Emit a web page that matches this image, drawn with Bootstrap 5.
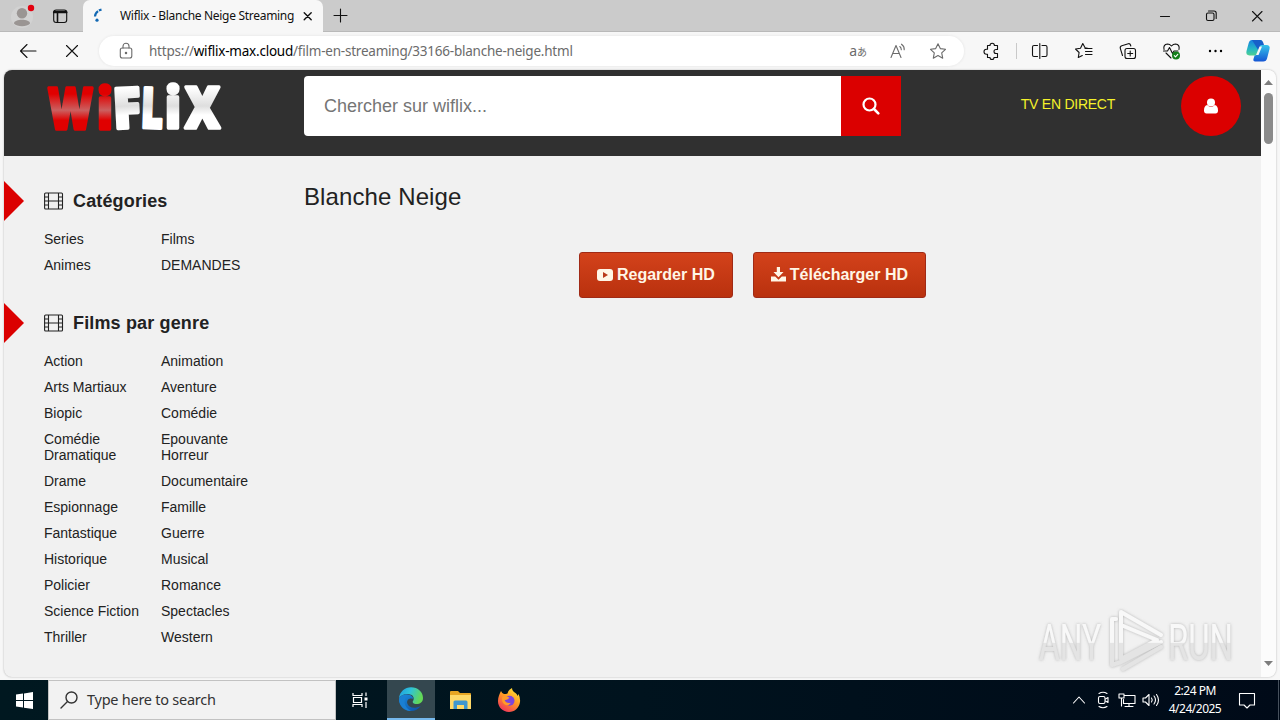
<!DOCTYPE html>
<html lang="fr">
  <head>
    <meta charset="UTF-8" />
    <meta name="viewport" content="width=device-width, initial-scale=1.0" />
    <title>Wiflix - Blanche Neige Streaming</title>
    <link
      href="https://cdn.jsdelivr.net/npm/bootstrap@5.3.0/dist/css/bootstrap.min.css"
      rel="stylesheet"
    />
    <style>
      body {
        height: 720px;
        background: #f7f7f7;
        font-family: "Noto Sans", "Open Sans", sans-serif;
        color: #111;
      }

      svg {
        display: block;
        flex-shrink: 0;
      }

      .ln {
        fill: none;
        stroke: currentColor;
        stroke-width: 1.1;
        stroke-linecap: round;
        stroke-linejoin: round;
      }

      /* tab strip */
      .tab-strip {
        height: 32px;
        background: #cbcbcb;
        border-bottom: 1px solid #b9b9b9;
      }

      .tab-tools {
        width: 83px;
      }

      .tab-active {
        width: 240px;
        height: 32px;
        background: #f7f7f7;
        border-radius: 7px 7px 0 0;
        font-size: 12px;
      }

      .tab-title {
        width: 176px;
        margin-left: 12px;
        letter-spacing: -0.3px;
      }

      .win-btn {
        width: 46px;
      }

      /* address bar */
      .tool-row {
        height: 38px;
      }

      .tool-btn {
        width: 44px;
      }

      .nav-tools {
        width: 99px;
        padding-left: 6px;
      }

      .omnibox {
        width: 865px;
        height: 30px;
        background: #fff;
        border-radius: 15px;
        box-shadow: 0 0 2px 1px #ededed;
        color: #6b6b6b;
        padding-left: 18px;
      }

      .url-text {
        font-size: 13.5px;
        margin-left: 14px;
        letter-spacing: -0.225px;
      }

      .omni-tools {
        margin-right: 9px;
      }

      .tool-sep {
        width: 1px;
        height: 16px;
        background: #c9c9c9;
      }

      .trans-icon {
        font: 14px/1 "Noto Sans", "Noto Sans CJK JP", sans-serif;
      }

      .trans-icon small {
        font-size: 10px;
      }

      .copilot {
        margin-left: 3px;
      }

      /* web page */
      .page-frame {
        margin: 0 4px 3px;
        height: 607px;
        background: #f1f1f1;
        border-radius: 8px;
        box-shadow: 0 0 2px #aaa;
        font-family: "Liberation Sans", Arial, sans-serif;
        color: #222;
      }

      .site {
        width: 1257px;
      }

      .site-head {
        height: 86px;
        background: #303030;
        padding: 6px 20px 0 40px;
      }

      .site-logo {
        width: 260px;
      }

      .site-logo svg {
        overflow: visible;
      }

      .search-input {
        width: 537px;
        height: 60px;
        background: #fff;
        border-radius: 4px 0 0 4px;
        padding-left: 20px;
        font-size: 18px;
        color: #757575;
      }

      .red-box {
        width: 60px;
        height: 60px;
        background: #db0000;
        color: #fff;
      }

      .tv-link {
        color: #f4f12a;
        font-size: 14px;
        line-height: 56px;
        margin-right: 66px;
        letter-spacing: -0.25px;
      }

      .side-menu {
        width: 300px;
        padding-top: 25px;
      }

      .side-title {
        height: 40px;
        font-size: 18px;
        font-weight: 700;
        letter-spacing: 0.15px;
        margin-bottom: 10px;
      }

      .side-title::before {
        content: "";
        width: 20px;
        height: 40px;
        background: #db0000;
        clip-path: polygon(0 0, 100% 50%, 0 100%);
        margin-right: 20px;
      }

      .side-links {
        display: grid;
        grid-template-columns: 117px 110px;
        row-gap: 10px;
        padding-left: 40px;
        margin-bottom: 30px;
        font-size: 14px;
        line-height: 16px;
      }

      .film-title {
        font-size: 24px;
        line-height: 30px;
        margin: 26px 0 40px;
        letter-spacing: 0.1px;
        font-weight: 400;
      }

      .film-main {
        width: 897px;
      }

      .film-actions {
        gap: 20px;
      }

      .btn-film {
        height: 46px;
        padding: 0 17px;
        border: 1px solid #a02a16;
        border-radius: 3px;
        background: linear-gradient(#d3421b, #b9310e);
        color: #fff6e6;
        font-size: 16px;
        font-weight: 700;
        line-height: 44px;
        gap: 4px;
      }

      /* scrollbar */
      .scroll-track {
        width: 15px;
        background: #fcfcfc;
        padding: 10px 0;
      }

      .scroll-thumb {
        width: 9px;
        height: 51px;
        border-radius: 5px;
        background: #8b8b8b;
        margin-top: 3px;
      }

      .watermark {
        position: absolute;
        left: 1034px;
        top: 606px;
      }

      /* taskbar */
      .task-bar {
        height: 40px;
        background: linear-gradient(to right, #001820, #00131e 50%, #000a18);
        color: #fff;
      }

      .task-btn {
        width: 48px;
        height: 40px;
      }

      .task-btn.on {
        background: #34474f;
        border-bottom: 2px solid #76b9ed;
        margin-left: 3px;
      }

      .task-search {
        width: 288px;
        height: 40px;
        background: #f2f2f2;
        border: 1px solid #c2c2c2;
        color: #333;
        font-size: 14.5px;
        padding-left: 11px;
        letter-spacing: -0.25px;
      }

      .task-clock {
        width: 64px;
        font-size: 12px;
        line-height: 18px;
        letter-spacing: -0.5px;
      }
    </style>
  </head>
  <body class="overflow-hidden">
    <div class="tab-strip d-flex">
      <div class="tab-tools d-flex align-items-center">
        <svg class="ms-2" width="28" height="32" viewBox="0 0 28 32">
          <circle cx="14" cy="17" r="11" fill="#d2d2d2" />
          <circle cx="14" cy="13.3" r="5.2" fill="#9a9593" />
          <path d="M6 23.5c0-5 16-5 16 0-3 3.5-13 3.500-16 0z" fill="#9a9593" />
          <circle cx="23" cy="8" r="3.200" fill="#e3000f" />
        </svg>
        <svg class="ln" width="48" height="32" viewBox="0 0 48 32">
          <rect x="17.700" y="10" width="13" height="12.500" rx="2.500" />
          <path d="M17.700 12.500h13M18 11.500h12.500M21.500 13v9" stroke-width="1.600" />
        </svg>
      </div>
      <div class="tab-active d-flex align-items-center">
        <svg width="25" height="32" viewBox="0 0 25 32" fill="none">
          <path d="M12 16.500c.2-3.600 2.700-6 6.500-6.800" stroke="#1268b3" stroke-width="2.200" stroke-dasharray="6.500 1" />
          <circle cx="14" cy="20.200" r="1.600" fill="#1268b3" />
        </svg>
        <span class="tab-title text-nowrap">Wiflix - Blanche Neige Streaming</span>
        <svg class="ln ms-1" width="16" height="16" viewBox="0 0 16 16">
          <path d="M4.200 4.700l7 7m0-7l-7 7" stroke-width="1.400" />
        </svg>
      </div>
      <svg class="ln" width="34" height="32" viewBox="0 0 34 32">
        <path d="M11 15.500h13M17.500 9v13" />
      </svg>
      <div class="d-flex ms-auto">
        <svg class="ln win-btn" height="32" viewBox="0 0 46 32"><path d="M18.500 16.500h9" /></svg>
        <svg class="ln win-btn" height="32" viewBox="0 0 46 32">
          <rect x="18.500" y="13" width="7.500" height="7.500" rx="1.500" />
          <path d="M20.500 11h5.500q2.200 0 2.200 2.200v5.300" />
        </svg>
        <svg class="ln win-btn" height="32" viewBox="0 0 46 32"><path d="M18.500 11.500l9.500 9.500m0-9.500l-9.500 9.500" /></svg>
      </div>
    </div>

    <div class="tool-row d-flex align-items-center">
      <div class="nav-tools d-flex">
        <svg class="ln tool-btn" height="24" viewBox="0 0 44 24"><path d="M30 12H14.500m6.500-6.500L14.500 12l6.500 6.500" /></svg>
        <svg class="ln tool-btn" height="24" viewBox="0 0 44 24"><path d="M16.500 6.500l11 11m0-11l-11 11" /></svg>
      </div>
      <div class="omnibox d-flex align-items-center">
        <svg class="ln" width="18" height="18" viewBox="0 0 18 18">
          <rect x="3.300" y="6" width="11.500" height="10" rx="2" />
          <path d="M6 6V4.300a3 3 0 0 1 6 0V6" />
          <circle cx="9" cy="11" r=".7" fill="currentColor" />
        </svg>
        <span class="url-text text-nowrap">https://<span class="text-black">wiflix-max.cloud</span>/film-en-streaming/33166-blanche-neige.html</span>
        <div class="omni-tools d-flex align-items-center ms-auto">
          <span class="trans-icon text-center">a<small>あ</small></span>
          <svg class="ln ms-3" width="30" height="20" viewBox="0 0 30 20">
            <path d="M8 16.500L13 4.500l5 12M9.800 12.500h6.500M16.800 5.500q1.500 1 1.500 3.300M18.500 3.200q3 2 2.700 5.600" />
          </svg>
          <svg class="ln ms-2" width="34" height="20" viewBox="0 0 34 20">
            <path d="M17 2.800l2.300 4.800 5.200.7-3.800 3.600 1 5.300-4.700-2.600-4.700 2.600 1-5.300-3.800-3.600 5.200-.7z" />
          </svg>
        </div>
      </div>
      <svg class="ln ms-2" width="40" height="24" viewBox="0 0 40 24">
        <path d="M15.500 6.500H18a2.200 2.200 0 1 1 4.400 0h3.100v4H24a2 2 0 0 0 0 4h1.500v4H22a2 2 0 0 1-4 0h-2.500v-3.300h-1a2.500 2.500 0 0 1 0-5h1z" />
      </svg>
      <div class="tool-sep ms-1"></div>
      <svg class="ln tool-btn" height="24" viewBox="0 0 44 24">
        <path d="M20.500 6.500H17A1.500 1.500 0 0 0 15.500 8v8a1.500 1.500 0 0 0 1.500 1.500h3.500M25 6.500h3.500A1.500 1.500 0 0 1 30 8v8a1.500 1.500 0 0 1-1.500 1.500H25M22.800 4.500v15" />
      </svg>
      <svg class="ln tool-btn" height="24" viewBox="0 0 44 24">
        <path d="M27.500 9.500l-3.300-.6L21.800 4.500l-2.300 4.700-5 .8 3.600 3.500-.8 5 4-2M24.500 12.500H31M24 9.500h7M24.500 15.500H31" />
      </svg>
      <svg class="ln tool-btn" height="24" viewBox="0 0 44 24">
        <rect x="20" y="9.500" width="10.500" height="10" rx="2" />
        <path d="M25.200 12v5m-2.500-2.500h5M17.500 16.500l-2.200-7.200q-.5-2 1.500-2.600l6.500-2q1.700-.4 2.200 1.300l.3 1" />
      </svg>
      <svg class="ln tool-btn" height="24" viewBox="0 0 44 24">
        <path d="M15 10.500q-1-5 3.500-5.500 2.300 0 4 2 1.700-2 4-2 4.500.5 3.500 5.500M17 14l5 5M14.500 12h4l2-3.500 3 6 1.500-2.500h4" />
        <circle cx="27" cy="16.500" r="4" fill="#14801b" stroke="none" />
        <path d="M25.300 16.600l1.200 1.200 2.300-2.400" stroke="#fff" />
      </svg>
      <svg class="tool-btn" height="24" viewBox="0 0 44 24">
        <circle cx="17" cy="12" r="1.200" /><circle cx="22.500" cy="12" r="1.200" /><circle cx="28" cy="12" r="1.200" />
      </svg>
      <svg class="copilot" width="36" height="26" viewBox="0 0 36 26">
        <defs>
          <linearGradient id="cpA" x1="0" y1="0" x2="0" y2="1">
            <stop offset="0" stop-color="#1680e0" /><stop offset=".6" stop-color="#27b8c3" /><stop offset="1" stop-color="#4fd08f" />
          </linearGradient>
          <linearGradient id="cpB" x1="0" y1="0" x2="0" y2="1">
            <stop offset="0" stop-color="#35c4ea" /><stop offset="1" stop-color="#1556d4" />
          </linearGradient>
        </defs>
        <path d="M12 2h8q3 0 2.200 3l-3 9q-1 3.500-4 3.500H9.500Q5.500 17 6.500 13l2.200-8q.8-3 3.300-3z" fill="url(#cpA)" />
        <path d="M20.500 7h6q4 .3 3 4l-2.300 9q-.8 3.500-4 3.500h-8q-2.500 0-1.600-3l1-3q3 0 4-4z" fill="url(#cpB)" />
        <path d="M12 2h8q2.500 0 3.200 2.500l.8 2.500h-3.500l-2 5.500z" fill="#1760c9" />
        <path d="M19.500 8.500h2.500l-3.500 8.500H16z" fill="#f7f7f7" />
      </svg>
    </div>

    <div class="page-frame d-flex overflow-hidden">
      <div class="site">
        <header class="site-head d-flex">
          <div class="site-logo">
            <svg width="180" height="76" viewBox="0 0 180 76">
              <defs>
                <linearGradient id="red" x1="0" y1="0" x2="0" y2="60" gradientUnits="userSpaceOnUse">
                  <stop offset=".3" stop-color="#e00000" /><stop offset=".57" stop-color="#cb6060" /><stop offset=".74" stop-color="#e00000" />
                </linearGradient>
                <linearGradient id="grey" x1="0" y1="0" x2="0" y2="60" gradientUnits="userSpaceOnUse">
                  <stop offset=".2" stop-color="#fff" /><stop offset=".5" stop-color="#dedede" /><stop offset=".65" stop-color="#fff" />
                </linearGradient>
              </defs>
              <g font-family="Open Sans, Noto Sans, sans-serif" font-weight="800" font-size="56" stroke-width="3.500" stroke-linejoin="round">
                <g fill="url(#red)" stroke="url(#red)">
                  <text x="4" y="53" textLength="45" lengthAdjust="spacingAndGlyphs">W</text>
                  <text x="53" y="53" textLength="16" lengthAdjust="spacingAndGlyphs">i</text>
                </g>
                <g fill="url(#grey)" stroke="url(#grey)">
                  <text x="69" y="52" textLength="28" lengthAdjust="spacingAndGlyphs" transform="rotate(-3 83 35)">F</text>
                  <text x="97" y="52" textLength="22" lengthAdjust="spacingAndGlyphs" transform="rotate(2 108 35)">L</text>
                  <text x="121" y="52" textLength="16" lengthAdjust="spacingAndGlyphs">i</text>
                  <text x="141" y="52" textLength="35" lengthAdjust="spacingAndGlyphs">X</text>
                </g>
              </g>
            </svg>
          </div>
          <div class="search-input d-flex align-items-center">Chercher sur wiflix...</div>
          <div class="red-box d-flex align-items-center justify-content-center">
            <svg width="18" height="18" viewBox="0 0 18 18" fill="none" stroke="#fff" stroke-linecap="round">
              <circle cx="7.500" cy="7.500" r="6" stroke-width="2.200" />
              <path d="M12 12l4.300 4.300" stroke-width="2.600" />
            </svg>
          </div>
          <span class="tv-link ms-auto">TV EN DIRECT</span>
          <div class="red-box rounded-circle d-flex align-items-center justify-content-center">
            <svg width="16" height="18" viewBox="0 0 16 18" fill="#fff">
              <circle cx="8" cy="5.500" r="4" />
              <path d="M4.300 8q1.700 2 3.700 2t3.700-2Q15 8.500 15 13.500 15 16.500 12.500 16.500h-9Q1 16.500 1 13.500 1 8.500 4.300 8z" />
            </svg>
          </div>
        </header>

        <div class="d-flex">
          <aside class="side-menu">
            <div class="side-title d-flex align-items-center">
              <svg class="me-2" width="21" height="18" viewBox="0 0 21 18"><use href="#film" /></svg>Catégories
            </div>
            <div class="side-links">
              <span>Series</span><span>Films</span>
              <span>Animes</span><span>DEMANDES</span>
            </div>
            <div class="side-title d-flex align-items-center">
              <svg class="me-2" width="21" height="18" viewBox="0 0 21 18">
                <g id="film" fill="none" stroke="#222" stroke-width="1.100">
                  <rect x=".6" y="1" width="17.900" height="16" rx="1" />
                  <path d="M4.500 1v16M14.500 1v16M4.500 9h10M.5 5h4M.5 9h4M.5 13h4M14.500 5h4M14.500 9h4M14.500 13h4" />
                </g>
              </svg>Films par genre
            </div>
            <div class="side-links">
              <span>Action</span><span>Animation</span>
              <span>Arts Martiaux</span><span>Aventure</span>
              <span>Biopic</span><span>Comédie</span>
              <span>Comédie<br />Dramatique</span><span>Epouvante<br />Horreur</span>
              <span>Drame</span><span>Documentaire</span>
              <span>Espionnage</span><span>Famille</span>
              <span>Fantastique</span><span>Guerre</span>
              <span>Historique</span><span>Musical</span>
              <span>Policier</span><span>Romance</span>
              <span>Science Fiction</span><span>Spectacles</span>
              <span>Thriller</span><span>Western</span>
            </div>
          </aside>
          <main class="film-main">
            <h1 class="film-title">Blanche Neige</h1>
            <div class="film-actions d-flex justify-content-center">
              <div class="btn-film d-flex align-items-center">
                <svg width="16" height="14" viewBox="0 0 16 14">
                  <rect y="1" width="16" height="12" rx="3" fill="#fff6e6" />
                  <path d="M6 4l5 3-5 3z" fill="#b93a1a" />
                </svg>
                Regarder HD
              </div>
              <div class="btn-film d-flex align-items-center">
                <svg width="15" height="16" viewBox="0 0 15 16" fill="#fff6e6">
                  <path d="M5.800 0H9v5h3.500l-5 5.200-5-5.200h3.300z" />
                  <path d="M0 9.500h4.200l3.300 3.200 3.300-3.200H15v5H0z" />
                </svg>
                Télécharger HD
              </div>
            </div>
          </main>
        </div>
      </div>
      <div class="scroll-track d-flex flex-column align-items-center">
        <svg width="9" height="10" viewBox="0 0 9 10"><path d="M4.500 0L9 5H0z" fill="#7d7d7d" /></svg>
        <div class="scroll-thumb"></div>
        <svg class="mt-auto" width="9" height="8" viewBox="0 0 9 8"><path d="M0 2h9L4.500 7z" fill="#7d7d7d" /></svg>
      </div>
    </div>

    <svg class="watermark" width="206" height="70" viewBox="0 0 206 70">
      <defs>
        <filter id="halo" x="-10%" y="-10%" width="120%" height="120%">
          <feDropShadow dx="0" dy="0" stdDeviation="1.800" flood-color="#888" flood-opacity=".6" />
        </filter>
        <linearGradient id="wm" x1="0" y1="0" x2="0" y2="70" gradientUnits="userSpaceOnUse">
          <stop offset=".52" stop-color="#f8f8f8" /><stop offset=".53" stop-color="#e4e4e4" />
        </linearGradient>
      </defs>
      <g filter="url(#halo)">
        <g font-family="Roboto, sans-serif" font-size="50" fill="url(#wm)">
          <text x="5" y="54" textLength="62" lengthAdjust="spacingAndGlyphs">ANY</text>
          <text x="134" y="54" textLength="65" lengthAdjust="spacingAndGlyphs">RUN</text>
        </g>
        <g fill="none" stroke="url(#wm)" stroke-width="4" stroke-linejoin="round" stroke-linecap="round">
          <path d="M87 19V6l40 23M87 19v34l36-19-36-15M82 13h-4v46l9-3 40-20M89 63l38-22" />
        </g>
      </g>
    </svg>

    <footer class="task-bar d-flex align-items-center">
      <div class="task-btn d-flex align-items-center justify-content-center">
        <svg width="17" height="17" viewBox="0 0 17 17" fill="#fff">
          <path d="M0 2.500l7-1V8H0zM8 1.400L17 0v8H8zM0 9h7v6.600l-7-1zM8 9h9v8l-9-1.300z" />
        </svg>
      </div>
      <div class="task-search d-flex align-items-center">
        <svg class="ln" width="27" height="20" viewBox="0 0 27 20">
          <circle cx="11.500" cy="7.500" r="5.500" stroke-width="1.400" /><path d="M7.500 11.500L1 18" stroke-width="1.400" />
        </svg>
        Type here to search
      </div>
      <div class="task-btn d-flex align-items-center justify-content-center">
        <svg width="18" height="18" viewBox="0 0 18 18" fill="none" stroke="#fff" stroke-width="1.200">
          <path d="M2 2v2.500h9V2M2 16v-2.500h9V16M2.500 6.500h8v5h-8zM15 1.500V5M15 11v6" />
          <path d="M13.500 6.500h3v3h-3z" fill="#fff" stroke="none" />
        </svg>
      </div>
      <div class="task-btn on d-flex align-items-center justify-content-center">
        <svg width="26" height="26" viewBox="0 0 26 26">
          <defs>
            <linearGradient id="edgeTop" x1="0" y1="0" x2="1" y2=".3">
              <stop offset="0" stop-color="#1d9be0" /><stop offset=".5" stop-color="#2fc3d8" /><stop offset="1" stop-color="#63d857" />
            </linearGradient>
            <linearGradient id="edgeLow" x1="0" y1="0" x2="1" y2="1">
              <stop offset="0" stop-color="#1b8fe0" /><stop offset="1" stop-color="#0c4da5" />
            </linearGradient>
          </defs>
          <path d="M1 12.500C1.500 5.500 7 1.200 13 1.200 20 1.200 25 6 25 12c0 4-3 6-6.500 6-3 0-4.500-1.500-3.500-3 1.500-2 1-6-3.500-6.800C7 7.500 2.500 9 1 12.500z" fill="url(#edgeTop)" />
          <path d="M1 13C2 9.500 6 8 10 8.500c3.500.4 5.300 2.500 5.300 4.500-4-1.500-7 1-6 4.500 1 4 7 6 13.500 2.500C20.500 23 17 25 13 25 6 25 1 19.500 1 13z" fill="url(#edgeLow)" />
          <path d="M10 9c-5 3-5 12 3 16C7 25.500 1 20 1 13c1.500-3.500 5-5 9-4z" fill="#1a7fd2" />
        </svg>
      </div>
      <div class="task-btn d-flex align-items-center justify-content-center">
        <svg class="ms-1" width="22" height="20" viewBox="0 0 22 20">
          <path d="M0 2q0-1 1-1h7l2 2h10q1 0 1 1v15H0z" fill="#e8a623" />
          <path d="M0 5h21v14H0z" fill="#ffd968" />
          <path d="M3.500 19v-7q0-1.500 1.500-1.500h11q1.500 0 1.500 1.500v7h-3.500v-4h-7v4z" fill="#3f97cf" />
        </svg>
      </div>
      <div class="task-btn d-flex align-items-center justify-content-center">
        <svg class="ms-1" width="24" height="26" viewBox="0 0 24 26">
          <defs>
            <linearGradient id="fx" x1=".8" y1="0" x2=".2" y2="1">
              <stop offset="0" stop-color="#ffe536" /><stop offset=".45" stop-color="#ff9a24" /><stop offset="1" stop-color="#f02d5f" />
            </linearGradient>
          </defs>
          <path d="M4 4q1 2.500 3 3 2 0 3.500-.5Q11 3 15 1q0 3 3.500 5 1.500 1 2 3l1-2q2 4 1.500 8c-.8 6-5.500 10-11 10C5.500 25 .8 20 1 14c0-4 1.500-7 3-10z" fill="url(#fx)" />
          <circle cx="12.500" cy="13.800" r="5" fill="#7b45dc" />
          <path d="M5.500 9.500q4-1.200 7 1.300-2 2.700-5 2 1.500 4 6.500 3-3 4.200-7 1.200-3-2.800-1.500-7.500z" fill="#ff9b28" />
        </svg>
      </div>
      <div class="d-flex align-items-center ms-auto">
        <svg class="ln" width="24" height="20" viewBox="0 0 24 20"><path d="M6.500 13l5.500-6 5.500 6" /></svg>
        <svg class="ln" width="24" height="20" viewBox="0 0 24 20">
          <rect x="7.500" y="6.500" width="6.500" height="7" rx="1.500" /><path d="M14.500 9l2.500-1.500v5L14.500 11M8 3.500q4-2.500 8 0M8 16.500q4 2.500 8 0" />
        </svg>
        <svg class="ln" width="24" height="20" viewBox="0 0 24 20">
          <path d="M9.500 5.500H20v8H8.500V9.500M4 4h5v4H4zM6.500 8v8M14 13.500v3M10 16.500h8" />
        </svg>
        <svg class="ln" width="24" height="20" viewBox="0 0 24 20">
          <path d="M4 8h2.500L10 4.500v11L6.500 12H4zM12.500 8q1.500 2 0 4M15 6q3 4 0 8M17.500 4.500q4 5.500 0 11" />
        </svg>
        <div class="task-clock text-center text-nowrap"><div>2:24 PM</div><div>4/24/2025</div></div>
        <svg class="ln ms-1" width="32" height="20" viewBox="0 0 32 20">
          <path d="M8.500 3.500h15V15H19l-3 3-3-3H8.500z" />
        </svg>
        <svg width="17" height="40" viewBox="0 0 17 40"><path d="M15.500 0v40" stroke="#46505c" /></svg>
      </div>
    </footer>

    <script src="https://cdn.jsdelivr.net/npm/bootstrap@5.3.0/dist/js/bootstrap.bundle.min.js"></script>
  </body>
</html>
